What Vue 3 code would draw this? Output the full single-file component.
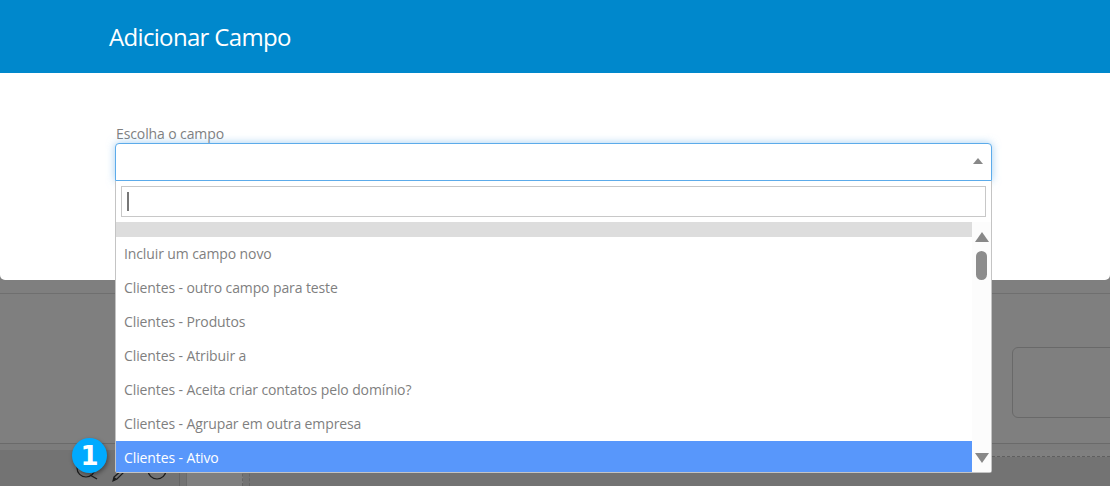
<template>
  <div class="page">
    <div class="modal">
      <header class="modal-head">
        <h1>Adicionar Campo</h1>
      </header>
      <div class="modal-body">
        <label class="field-label">Escolha o campo</label>
        <div class="select">
          <span class="caret-up"></span>
        </div>
      </div>
    </div>

    <div class="backdrop">
      <div class="back-top">
        <div class="back-box"></div>
      </div>
      <div class="back-strip"></div>
      <div class="back-bottom">
        <div class="dash-band"></div>
        <svg class="tools" width="110" height="26" viewBox="0 0 110 26">
          <circle cx="11" cy="8" r="9" fill="none" stroke="#1c1c1c" stroke-width="1.2" />
          <path d="M15 15l7 4" stroke="#1c1c1c" stroke-width="1.4" fill="none" />
          <path d="M39 17l8-7 2 2-7 7-4 2z" fill="none" stroke="#1c1c1c" stroke-width="1.2" />
          <path d="M38 21l1-4 3 2z" fill="#1c1c1c" />
          <circle cx="82" cy="10" r="9" fill="none" stroke="#1c1c1c" stroke-width="1.2" />
          <path d="M82 6v5" stroke="#1c1c1c" stroke-width="1.2" />
        </svg>
        <div class="cell"><div class="cell-inner"></div></div>
      </div>
    </div>

    <div class="badge">1</div>

    <div class="dropdown">
      <div class="search-wrap">
        <div class="search"><span class="cursor"></span></div>
      </div>
      <div class="results">
        <ul class="options">
          <li class="opt-empty"></li>
          <li v-for="opt in options" :key="opt">{{ opt }}</li>
          <li class="active">Clientes - Ativo</li>
        </ul>
        <div class="scrollbar">
          <span class="arrow-up"></span>
          <span class="thumb"></span>
          <span class="arrow-down"></span>
        </div>
      </div>
    </div>
  </div>
</template>

<script setup>
const options = [
  'Incluir um campo novo',
  'Clientes - outro campo para teste',
  'Clientes - Produtos',
  'Clientes - Atribuir a',
  'Clientes - Aceita criar contatos pelo domínio?',
  'Clientes - Agrupar em outra empresa'
]
</script>

<style>
html, body {
  margin: 0;
  background: #7f7f7f;
}
</style>

<style scoped>
.page {
  position: relative;
  width: 1110px;
  height: 486px;
  overflow: hidden;
  font-family: "Open Sans", "Liberation Sans", sans-serif;
  background: #7f7f7f;
}
.modal {
  height: 280px;
  background: #fff;
  border-radius: 0 0 5px 5px;
}
.modal-head {
  height: 73px;
  background: #0088cc;
  padding-left: 109px;
  box-sizing: border-box;
}
.modal-head h1 {
  margin: 0;
  font-size: 24px;
  font-weight: 400;
  line-height: 73px;
  letter-spacing: -0.67px;
  color: #fff;
}
.modal-body {
  padding: 52px 118px 0 115px;
}
.field-label {
  display: block;
  height: 18px;
  font-size: 14px;
  line-height: 17px;
  letter-spacing: -0.11px;
  color: #7f7f7f;
  margin-left: 1px;
}
.select {
  position: relative;
  height: 38px;
  box-sizing: border-box;
  border: 1px solid #5cabea;
  border-radius: 4px 4px 0 0;
  background: #fff;
  box-shadow: 0 0 8px rgba(102, 175, 233, 0.6);
}
.caret-up {
  position: absolute;
  right: 8px;
  top: 14px;
  border-left: 5.5px solid transparent;
  border-right: 5.5px solid transparent;
  border-bottom: 6px solid #888;
}
.backdrop {
  height: 206px;
  background: #7f7f7f;
}
.back-top {
  height: 164px;
  box-sizing: border-box;
  padding: 67px 0 0 1012px;
  border-bottom: 1px solid #6a6a6a;
  background: linear-gradient(#6f6f6f, #6f6f6f) 0 13px / 100% 1px no-repeat;
}
.back-box {
  width: 110px;
  height: 71px;
  box-sizing: border-box;
  border: 1px solid #696969;
  border-radius: 6px;
}
.back-strip {
  height: 6px;
  background: #7c7c7c;
}
.back-bottom {
  position: relative;
  height: 36px;
  background: #737373;
}
.dash-band {
  position: absolute;
  left: 992px;
  right: 0;
  top: 0;
  height: 6px;
  background: #7f7f7f;
  border-bottom: 1px dashed #5f5f5f;
}
.tools {
  position: absolute;
  left: 75px;
  top: 10px;
}
.cell {
  position: absolute;
  left: 179px;
  top: 0;
  width: 71px;
  height: 36px;
  box-sizing: border-box;
  padding: 0 6px;
  border-left: 1px solid #656565;
  border-right: 1px dashed #656565;
}
.cell-inner {
  height: 100%;
  background: #7f7f7f;
  border-left: 1px solid #6b6b6b;
  border-right: 1px dashed #656565;
}
.badge {
  position: absolute;
  left: 72px;
  top: 438px;
  width: 35px;
  height: 35px;
  border-radius: 50%;
  background: #00aaff;
  box-shadow: 1px 2px 4px rgba(0, 0, 0, 0.4);
  color: #fff;
  font-family: "DejaVu Sans", sans-serif;
  font-size: 26px;
  font-weight: 700;
  line-height: 36px;
  text-align: center;
}
.dropdown {
  position: absolute;
  left: 115px;
  top: 181px;
  width: 877px;
  height: 292px;
  box-sizing: border-box;
  background: #fff;
  border: 1px solid #c4c4c4;
  border-top: 0;
  border-radius: 0 0 3px 3px;
}
.search-wrap {
  padding: 5px;
}
.search {
  height: 31px;
  box-sizing: border-box;
  border: 1px solid #c8c8c8;
  padding: 5px;
}
.cursor {
  display: block;
  width: 2px;
  height: 19px;
  background: #777;
}
.results {
  display: flex;
  height: 250px;
}
.options {
  flex: 1;
  margin: 0;
  padding: 0;
  list-style: none;
  overflow: hidden;
}
.options li {
  height: 34px;
  padding-left: 8px;
  font-size: 14px;
  line-height: 34px;
  letter-spacing: -0.11px;
  color: #7f7f7f;
}
.options .opt-empty {
  height: 15px;
  background: #dddddd;
}
.options .active {
  height: 31px;
  line-height: 33px;
  background: #5897fb;
  color: #fff;
}
.scrollbar {
  position: relative;
  width: 19px;
  background: #fcfcfc;
}
.arrow-up,
.arrow-down {
  position: absolute;
  left: 2.5px;
  border-left: 7px solid transparent;
  border-right: 7px solid transparent;
}
.arrow-up {
  top: 10px;
  border-bottom: 10px solid #888;
}
.arrow-down {
  bottom: 9px;
  border-top: 10px solid #888;
}
.thumb {
  position: absolute;
  left: 4px;
  top: 29px;
  width: 11px;
  height: 29px;
  border-radius: 6px;
  background: #8c8c8c;
}
</style>
